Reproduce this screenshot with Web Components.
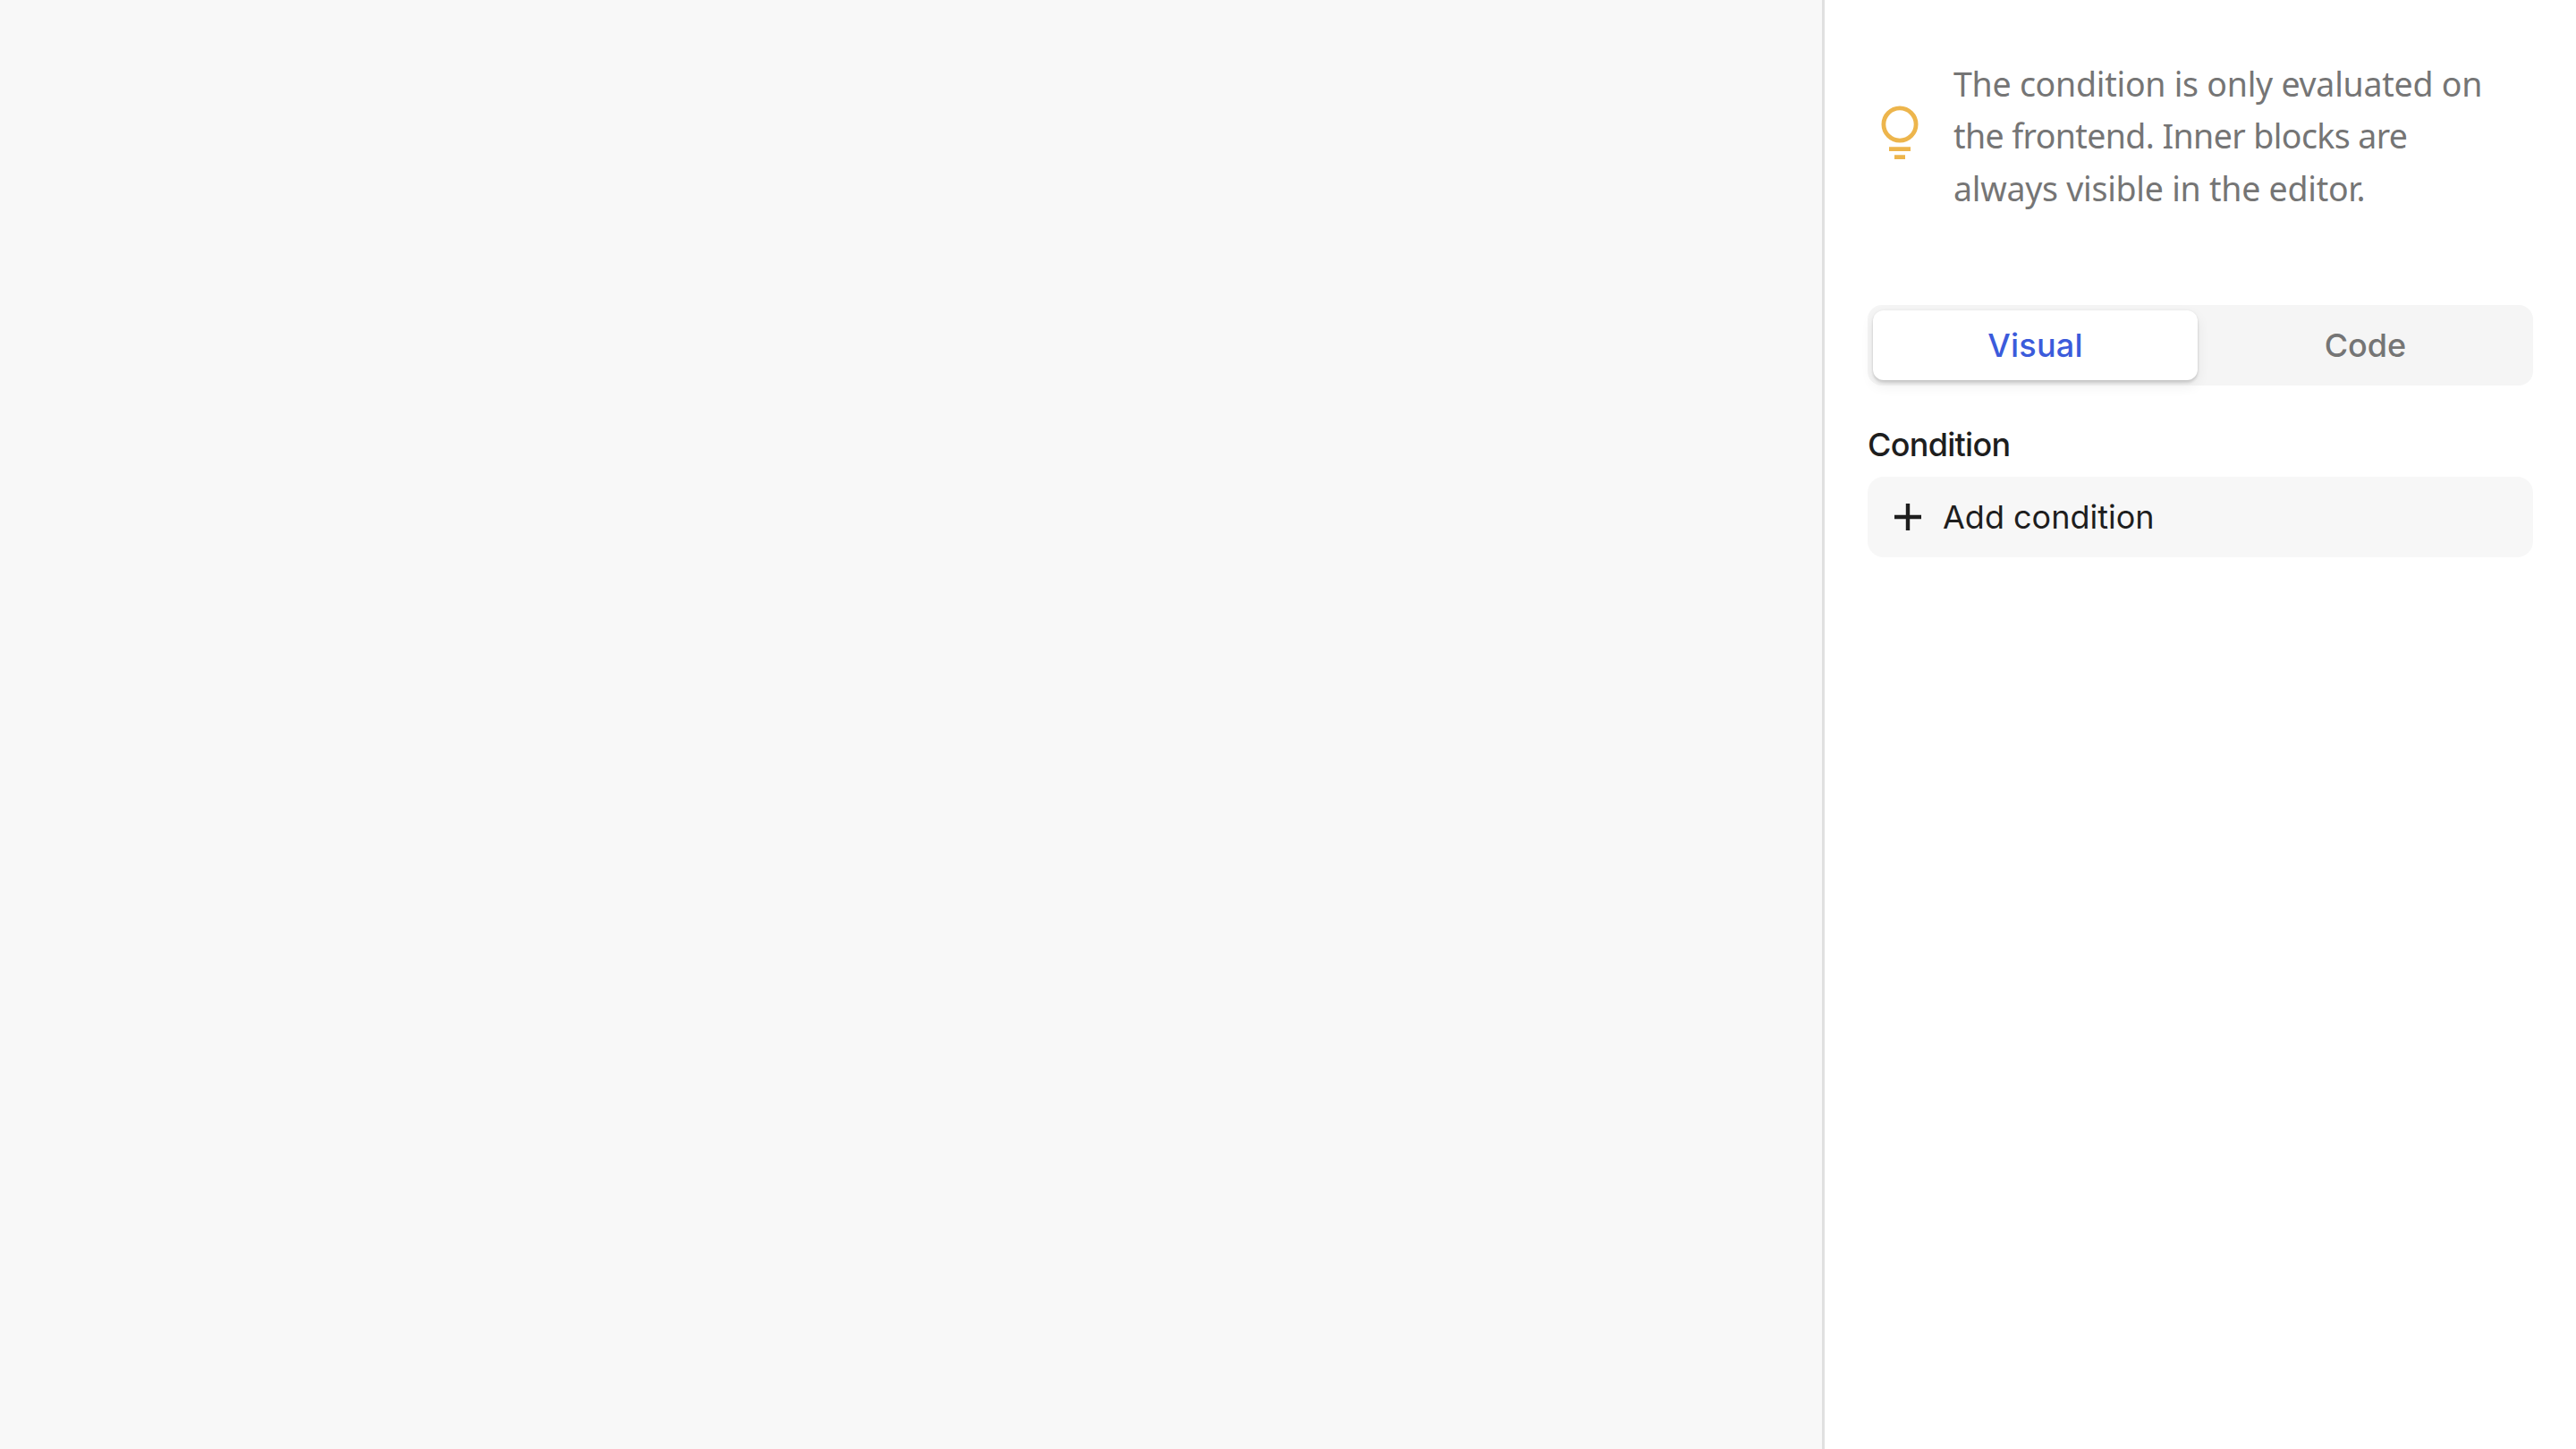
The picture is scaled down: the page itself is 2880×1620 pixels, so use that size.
<!DOCTYPE html>
<html lang="en">
<head>
<meta charset="utf-8">
<title>Condition</title>
<style>
  html, body { height: 100%; }
  body { margin: 0; background: #f8f8f8; overflow: hidden; }
</style>
</head>
<body>
<editor-layout>
  <editor-notice slot="sidebar">
    The condition is only evaluated on<br>
    <span style="letter-spacing:-0.6px">the frontend. Inner blocks are</span><br>
    always visible in the editor.
  </editor-notice>
  <segmented-control slot="sidebar">
    <segmented-option selected>Visual</segmented-option>
    <segmented-option>Code</segmented-option>
  </segmented-control>
  <field-group slot="sidebar" label="Condition">
    <add-button>Add condition</add-button>
  </field-group>
</editor-layout>

<script>
(function () {
  class BaseElement extends HTMLElement {
    constructor() {
      super();
      this.attachShadow({ mode: "open" });
    }

    connectedCallback() {
      this.shadowRoot.innerHTML = "<style>" + this.styles() + "</style>" + this.markup();
    }
  }

  class EditorLayout extends BaseElement {
    styles() {
      return (
        ":host{display:flex;height:100%;font-family:Inter,'Liberation Sans',sans-serif;font-size:36px;color:#1e1e1e;}" +
        "main{flex:1;background:#f8f8f8;}" +
        "aside{box-sizing:border-box;width:843px;border-left:3px solid #e0e0e0;background:#fff;padding:64px 48px 0;}"
      );
    }

    markup() {
      return '<main></main><aside><slot name="sidebar"></slot></aside>';
    }
  }

  class EditorNotice extends BaseElement {
    styles() {
      return (
        ":host{display:flex;align-items:center;height:176px;margin-bottom:101px;}" +
        "svg{flex:none;width:72px;height:72px;margin-right:24px;}" +
        "p{margin:0;padding-top:1px;font:37.5px/58.5px 'Noto Sans','Open Sans',sans-serif;letter-spacing:-.26px;color:#757575;white-space:nowrap;}"
      );
    }

    markup() {
      return (
        '<svg viewBox="0 0 72 72" fill="none" stroke="#edb54c" stroke-width="4.8">' +
        '<circle cx="36" cy="23" r="18.1"/>' +
        '<path d="M24 50.6h24M30 59.7h12"/>' +
        "</svg><p><slot></slot></p>"
      );
    }
  }

  class SegmentedControl extends BaseElement {
    styles() {
      return ":host{display:flex;gap:6px;box-sizing:border-box;height:90px;padding:6px;border-radius:16px;background:#f5f5f5;}";
    }

    markup() {
      return "<slot></slot>";
    }
  }

  class SegmentedOption extends BaseElement {
    styles() {
      return (
        ":host{flex:1;display:block;line-height:78px;text-align:center;font-weight:500;color:#757575;border-radius:12px;}" +
        ":host([selected]){color:#3b5bdb;letter-spacing:.2px;background:#fff;box-shadow:0 0 3px rgba(0,0,0,.06),0 3px 3px rgba(0,0,0,.12),0 6px 15px rgba(0,0,0,.07);}"
      );
    }

    markup() {
      return "<slot></slot>";
    }
  }

  class FieldGroup extends BaseElement {
    styles() {
      return (
        ":host{display:block;margin-top:44px;}" +
        ".label{margin-bottom:14px;line-height:44px;font-weight:500;letter-spacing:-.72px;}"
      );
    }

    markup() {
      return '<div class="label">' + this.getAttribute("label") + "</div><slot></slot>";
    }
  }

  class AddButton extends BaseElement {
    styles() {
      return (
        ":host{display:flex;align-items:center;box-sizing:border-box;height:90px;padding-left:30px;border-radius:18px;background:#f7f7f7;}" +
        "svg{flex:none;width:30px;height:30px;margin-right:24px;}"
      );
    }

    markup() {
      return (
        '<svg viewBox="0 0 30 30" stroke="#1e1e1e" stroke-width="4.4"><path d="M15 0v30M0 15h30"/></svg>' +
        "<span><slot></slot></span>"
      );
    }
  }

  customElements.define("editor-layout", EditorLayout);
  customElements.define("editor-notice", EditorNotice);
  customElements.define("segmented-control", SegmentedControl);
  customElements.define("segmented-option", SegmentedOption);
  customElements.define("field-group", FieldGroup);
  customElements.define("add-button", AddButton);
})();
</script>
</body>
</html>
